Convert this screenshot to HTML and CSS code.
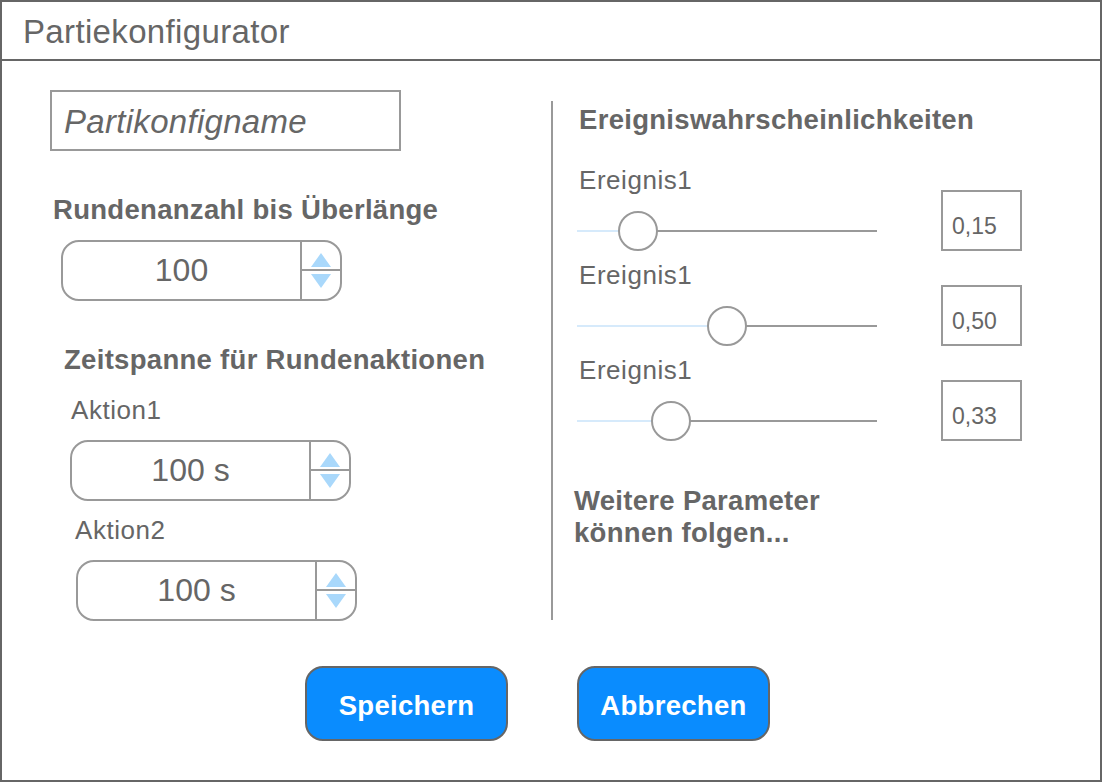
FILE: index.html
```html
<!DOCTYPE html>
<html lang="de">
<head>
<meta charset="utf-8">
<title>Partiekonfigurator</title>
<link rel="stylesheet" href="styles.css">
</head>
<body>
<div class="window">
  <div class="titlebar">Partiekonfigurator</div>
  <div class="main">
    <div class="left">
      <div class="namebox">Partikonfigname</div>
      <div class="heading h-runden">Rundenanzahl bis Überlänge</div>
      <div class="spinner sp1">
        <div class="val">100</div>
        <div class="arrows">
          <div class="up"><svg width="20" height="14" viewBox="0 0 20 14"><polygon points="10,0 20,14 0,14" /></svg></div>
          <div class="down"><svg width="20" height="14" viewBox="0 0 20 14"><polygon points="0,0 20,0 10,14" /></svg></div>
        </div>
      </div>
      <div class="heading h-zeit">Zeitspanne für Rundenaktionen</div>
      <div class="label l-a1">Aktion1</div>
      <div class="spinner sp2">
        <div class="val">100 s</div>
        <div class="arrows">
          <div class="up"><svg width="20" height="14" viewBox="0 0 20 14"><polygon points="10,0 20,14 0,14" /></svg></div>
          <div class="down"><svg width="20" height="14" viewBox="0 0 20 14"><polygon points="0,0 20,0 10,14" /></svg></div>
        </div>
      </div>
      <div class="label l-a2">Aktion2</div>
      <div class="spinner sp3">
        <div class="val">100 s</div>
        <div class="arrows">
          <div class="up"><svg width="20" height="14" viewBox="0 0 20 14"><polygon points="10,0 20,14 0,14" /></svg></div>
          <div class="down"><svg width="20" height="14" viewBox="0 0 20 14"><polygon points="0,0 20,0 10,14" /></svg></div>
        </div>
      </div>
    </div>
    <div class="sep"></div>
    <div class="right">
      <div class="heading h-ereig">Ereigniswahrscheinlichkeiten</div>
      <div class="events">
        <div class="event">
          <div class="ev-left">
            <div class="label">Ereignis1</div>
            <div class="slider">
              <div class="fill" style="width:61px"></div>
              <div class="thumb" style="left:41px"></div>
            </div>
          </div>
          <div class="valbox">0,15</div>
        </div>
        <div class="event">
          <div class="ev-left">
            <div class="label">Ereignis1</div>
            <div class="slider">
              <div class="fill" style="width:150px"></div>
              <div class="thumb" style="left:130px"></div>
            </div>
          </div>
          <div class="valbox">0,50</div>
        </div>
        <div class="event">
          <div class="ev-left">
            <div class="label">Ereignis1</div>
            <div class="slider">
              <div class="fill" style="width:94px"></div>
              <div class="thumb" style="left:74px"></div>
            </div>
          </div>
          <div class="valbox">0,33</div>
        </div>
      </div>
      <div class="heading more">Weitere Parameter<br>können folgen...</div>
    </div>
  </div>
  <div class="buttons">
    <button class="btn btn-save">Speichern</button>
    <button class="btn btn-cancel">Abbrechen</button>
  </div>
</div>
</body>
</html>
```

FILE: styles.css
```css
* { box-sizing: border-box; }
html, body { margin: 0; padding: 0; background: #fff; }
body { font-family: "Liberation Sans", Arial, sans-serif; color: #666; }

.window {
  width: 1102px;
  height: 782px;
  border: 2px solid #666;
  background: #fff;
  overflow: hidden;
}

.titlebar {
  height: 59px;
  border-bottom: 2px solid #666;
  padding: 11px 0 0 21px;
  font-size: 33px;
  letter-spacing: 0.35px;
  line-height: 38px;
}

.main {
  display: flex;
  align-items: flex-start;
  height: 560px;
}

.left {
  width: 549px;
  display: flex;
  flex-direction: column;
  align-items: flex-start;
}

.namebox {
  margin: 29px 0 0 48px;
  width: 351px;
  height: 61px;
  border: 2px solid #999;
  display: flex;
  align-items: center;
  padding: 3px 0 0 12px;
  font-size: 33px;
  letter-spacing: 0.3px;
  font-style: italic;
  white-space: nowrap;
}

.heading {
  font-size: 27.5px;
  letter-spacing: 0.3px;
  font-weight: bold;
  line-height: 32px;
  white-space: nowrap;
}
.h-runden { margin: 43px 0 0 51px; }
.h-zeit { margin: 43px 0 0 62px; }

.label {
  font-size: 26px;
  letter-spacing: 0.55px;
  line-height: 30px;
  white-space: nowrap;
}
.l-a1 { margin: 19px 0 0 69px; }
.l-a2 { margin: 14px 0 0 73px; }

.spinner {
  display: flex;
  height: 61px;
  width: 281px;
  border: 2px solid #999;
  border-radius: 18px;
  overflow: hidden;
}
.sp1 { margin: 14px 0 0 59px; }
.sp2 { margin: 15px 0 0 68px; }
.sp3 { margin: 15px 0 0 74px; }

.val {
  flex: 1;
  display: flex;
  align-items: center;
  justify-content: center;
  font-size: 32px;
  white-space: nowrap;
}
.arrows {
  width: 40px;
  border-left: 2px solid #999;
  display: flex;
  flex-direction: column;
}
.arrows .up, .arrows .down {
  flex: 1;
  display: flex;
  justify-content: center;
}
.arrows .up { align-items: flex-end; padding-bottom: 2px; }
.arrows .down { align-items: flex-start; padding-top: 3px; border-top: 2px solid #999; }
.arrows svg { display: block; fill: #a9d8fb; }

.sep {
  width: 2px;
  height: 519px;
  margin-top: 40px;
  background: #999;
}

.right {
  flex: 1;
  display: flex;
  flex-direction: column;
  align-items: flex-start;
}
.h-ereig { margin: 43px 0 0 26px; }

.events {
  margin: 29px 0 0 24px;
  display: flex;
  flex-direction: column;
  gap: 9px;
}
.event {
  display: flex;
  align-items: flex-end;
}
.ev-left {
  display: flex;
  flex-direction: column;
  gap: 16px;
}
.ev-left .label { margin-left: 2px; }

.slider {
  position: relative;
  width: 300px;
  height: 40px;
}
.slider::before {
  content: "";
  position: absolute;
  left: 0;
  right: 0;
  top: 19px;
  height: 2px;
  background: #999;
}
.fill {
  position: absolute;
  left: 0;
  top: 19px;
  height: 2px;
  background: #d6eafb;
}
.thumb {
  position: absolute;
  top: 0;
  width: 40px;
  height: 40px;
  border: 2px solid #999;
  border-radius: 50%;
  background: #fff;
}

.valbox {
  margin-left: 64px;
  width: 81px;
  height: 61px;
  border: 2px solid #999;
  font-size: 23px;
  line-height: 26px;
  padding: 21px 0 0 9px;
}

.more { margin: 44px 0 0 21px; }

.buttons {
  display: flex;
  gap: 69px;
  margin: 45px 0 0 303px;
}
.btn {
  height: 75px;
  border: 2px solid #666;
  border-radius: 18px;
  background: #0a8cfe;
  color: #fff;
  font-family: "Liberation Sans", Arial, sans-serif;
  font-size: 27.5px;
  letter-spacing: 0.3px;
  font-weight: bold;
  padding: 4px 0 0;
  display: flex;
  align-items: center;
  justify-content: center;
}
.btn-save { width: 203px; }
.btn-cancel { width: 193px; }
```
